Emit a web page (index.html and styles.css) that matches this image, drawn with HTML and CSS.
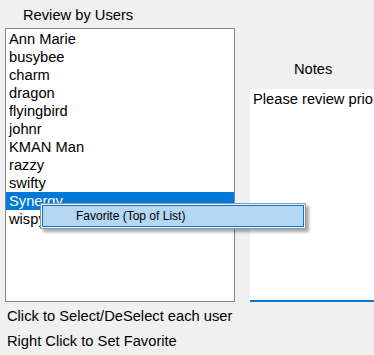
FILE: index.html
```html
<!DOCTYPE html>
<html lang="en">

<head>
    <meta charset="UTF-8">
    <meta name="viewport" content="width=device-width, initial-scale=1.0">
    <title>Review by Users</title>
    <link rel="stylesheet" href="styles.css">
</head>

<body>
    <div class="form">
        <div class="review">
            <div class="review-label">Review by Users</div>
            <ul class="user-list">
                <li>Ann Marie</li>
                <li>busybee</li>
                <li>charm</li>
                <li>dragon</li>
                <li>flyingbird</li>
                <li>johnr</li>
                <li>KMAN Man</li>
                <li>razzy</li>
                <li>swifty</li>
                <li class="selected">Synergy</li>
                <li>wispy</li>
            </ul>
            <div class="hint">Click to Select/DeSelect each user</div>
            <div class="hint">Right Click to Set Favorite</div>
        </div>
        <div class="notes">
            <div class="notes-label">Notes</div>
            <div class="notes-box">Please review prior to the meeting</div>
        </div>
    </div>

    <!-- right-click menu open over the list -->
    <div class="context-menu">
        <div class="menu-item">Favorite (Top of List)</div>
    </div>
</body>

</html>
```

FILE: styles.css
```css
html {
    background: #f0f0f0;
    font-family: "Liberation Sans", Arial, sans-serif;
    color: #000;
}

body {
    margin: 0;
    overflow: hidden;
}

.form {
    display: flex;
    padding-left: 5px;
}

.review {
    width: 230px;
    flex-shrink: 0;
}

.review-label {
    font-size: 14.7px;
    line-height: 17px;
    padding: 7px 0 0 18px;
    height: 21px;
}

.user-list {
    list-style: none;
    margin: 0;
    padding: 1px 0 0;
    height: 271px;
    background: #fff;
    border: 1px solid #828790;
    font-size: 14.7px;
}

.user-list li {
    height: 18px;
    line-height: 18px;
    padding-left: 3px;
    white-space: nowrap;
    overflow: hidden;
}

.user-list li.selected {
    background: #0078d7;
    color: #fff;
}

.hint {
    font-size: 14.7px;
    line-height: 17px;
    padding: 6px 0 2px 2px;
    white-space: nowrap;
}

.notes {
    flex: 1;
    margin-left: 15px;
    min-width: 0;
}

.notes-label {
    font-size: 14.7px;
    line-height: 17px;
    padding: 61px 0 0 44px;
    height: 28px;
}

.notes-box {
    height: 209px;
    background: #fff;
    border-bottom: 2px solid #0078d7;
    font-size: 14.7px;
    line-height: 17px;
    padding: 2px 0 0 3px;
    white-space: nowrap;
    overflow: hidden;
}

.context-menu {
    position: absolute;
    left: 40px;
    top: 203px;
    width: 262px;
    padding: 1px;
    background: #f2f2f2;
    border: 1px solid #979797;
    box-shadow: 3px 3px 3px rgba(0, 0, 0, 0.35);
}

.menu-item {
    height: 20px;
    line-height: 20px;
    padding-left: 33px;
    font-size: 12px;
    background: #b5d7f3;
    border: 1px solid #0078d7;
}
```
